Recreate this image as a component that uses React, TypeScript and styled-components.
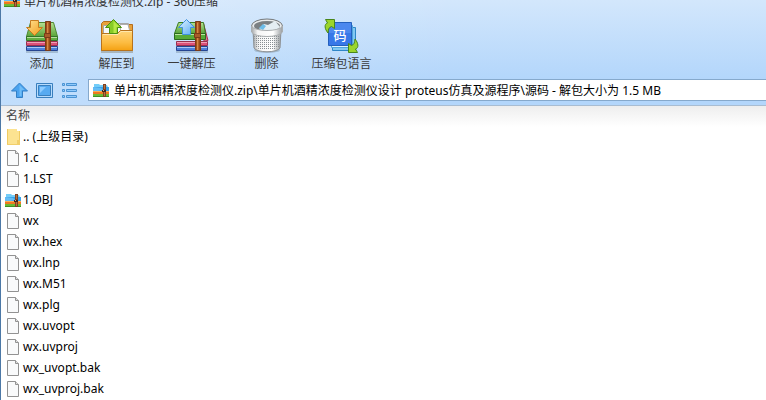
import React from "react";
import styled, { createGlobalStyle } from "styled-components";

const GlobalStyle = createGlobalStyle`
  * { box-sizing: border-box; }
  body {
    margin: 0;
    background: #fff;
    color: #000;
    font: 12px/16px "Noto Sans", "Noto Sans CJK SC", sans-serif;
    overflow: hidden;
  }
  button, input { font: inherit; color: inherit; }
  button { border: 0; padding: 0; background: none; cursor: pointer; }
  svg { display: block; flex: none; }
`;

const Window = styled.div`
  min-height: 100vh;
  border-left: 1px solid #4c78a6;
`;

const Chrome = styled.header`
  background: linear-gradient(100deg, rgba(255, 255, 255, 0.2), transparent 60%),
    linear-gradient(#d3e7fc, #b3d6fb 75%);
  border-bottom: 1px solid #a9bdd2;
`;

const TitleBar = styled.div`
  display: flex;
  align-items: flex-end;
  gap: 4px;
  height: 8px;
  padding-left: 3px;
  overflow: hidden;
  color: #333;
`;

const Title = styled.span`
  line-height: 12px;
  white-space: nowrap;
`;

const Toolbar = styled.div`
  display: flex;
  padding: 8px 0 0 3px;
`;

const ToolButton = styled.button`
  display: flex;
  flex-direction: column;
  align-items: center;
  justify-content: flex-start;
  gap: 2px;
  width: 75px;
  height: 60px;
  color: #3b3b3b;
  white-space: nowrap;
`;

const AddressRow = styled.div`
  display: flex;
  align-items: center;
  gap: 5px;
  height: 29px;
  padding: 0 0 1px 8px;
`;

const NavButton = styled.button`
  width: 20px;
  height: 20px;
`;

const AddressBox = styled.label`
  display: flex;
  flex: 1;
  align-items: center;
  gap: 5px;
  height: 22px;
  margin-left: 4px;
  padding-left: 4px;
  border: 1px solid #86a9cc;
  border-right: 0;
  background: #fff;
`;

const AddressInput = styled.input`
  flex: 1;
  min-width: 0;
  height: 20px;
  padding: 0;
  border: 0;
  outline: 0;
  background: transparent;
`;

const FileTable = styled.table`
  width: 100%;
  border-spacing: 0;
`;

const NameHeader = styled.th`
  height: 21px;
  padding: 0 5px 1px;
  background: linear-gradient(#eeeeee, #fff);
  color: #444;
  font-weight: 400;
  text-align: left;
`;

const NameCell = styled.td`
  padding: 0 4px;
`;

const Entry = styled.div`
  display: flex;
  align-items: center;
  gap: 2px;
  height: 21px;
  padding-bottom: 1px;
  white-space: nowrap;
`;

const ArchiveIcon = () => (
  <svg width="16" height="16" viewBox="0 0 16 16" aria-hidden="true">
    <path d="M1 5V2h5l1 1h7l1 2z" fill="#74cdf8" />
    <path d="M0 5h16v5H0z" fill="#3aa2ea" />
    <path d="M0 5l8 1 2 2-10 2z" fill="#65bdf5" />
    <path d="M0 9h16v3H0z" fill="#ef7920" />
    <path d="M0 9h16v1H0z" fill="#ffac51" />
    <path d="M0 12h16v3H0z" fill="#6cb936" />
    <path d="M0 14h16v1H0z" fill="#3d9224" />
    <path d="M10 2h3v13h-3z" fill="#7d4223" />
    <path d="M11 3h1v4h-1zm0 7h1v4h-1z" fill="#b8703e" />
    <path d="M9 8h4v2H9z" fill="#40251c" />
    <path d="M10 8h1v1h-1z" fill="#d7ad82" />
  </svg>
);

const FolderIcon = () => (
  <svg width="16" height="16" viewBox="0 0 16 16" aria-hidden="true">
    <path d="M2 0h10v2h3v14H2z" fill="#fce391" />
    <path d="M2 0h1v16H2zM14 2h1v14h-1z" fill="#f0cb62" />
    <path d="M12 11h3v5H2v-1h10z" fill="#f2cf6b" />
  </svg>
);

const PageIcon = () => (
  <svg width="16" height="16" viewBox="0 0 16 16" aria-hidden="true">
    <path d="M2.500 .5h8l3 3v12h-11z" fill="#f9fafb" stroke="#929292" />
    <path d="M10.500 .5v3h3" fill="#e1e1e1" stroke="#929292" />
  </svg>
);

const Books = ({ extract = false }: { extract?: boolean }) => {
  const id = extract ? "extract" : "add";
  return (
    <svg width="36" height="38" viewBox="0 0 36 38" aria-hidden="true">
      <defs>
        <linearGradient id={`${id}-cover`} x2="0" y2="1">
          <stop stopColor="#b5e093" />
          <stop offset="1" stopColor="#58a438" />
        </linearGradient>
        <linearGradient id={`${id}-belt`}>
          <stop stopColor="#7b3109" />
          <stop offset=".45" stopColor="#ce7631" />
          <stop offset="1" stopColor="#732f0e" />
        </linearGradient>
        <linearGradient id={`${id}-arrow`} x2="1" y2="1">
          <stop stopColor={extract ? "#e3f4ff" : "#ffe294"} />
          <stop offset="1" stopColor={extract ? "#54aaf4" : "#f29b16"} />
        </linearGradient>
      </defs>
      <path d="M2 36h32" stroke="#6d8599" strokeWidth="2" opacity=".4" />
      {extract && <path d="M29.500 7.500l4.500 17-4 1z" fill="#df7890" stroke="#a82c4a" />}
      <path d="M2.500 30.500h31v4h-31z" fill="#4f80dc" stroke="#254591" />
      <path d="M3 31.500h30" stroke="#a9c8f5" />
      <path d="M2.500 25.500h31v4h-31z" fill="#dc527a" stroke="#98304e" />
      <path d="M3 26.500h30" stroke="#f0a0b6" />
      {extract ? (
        <>
          <path d="M4.500 6.500h25l2 11h-31z" fill={`url(#${id}-cover)`} stroke="#387b22" />
          <path d="M.5 17.500h31v6h-31z" fill="#57ab38" stroke="#2c6b1f" />
          <path d="M1 18.500h30" stroke="#bce79d" />
        </>
      ) : (
        <>
          <path d="M6.500 6.500h23l4 14h-31z" fill={`url(#${id}-cover)`} stroke="#4d8730" />
          <path d="M2.500 20.500h31v4h-31z" fill="#62af43" stroke="#347529" />
          <path d="M3 21.500h30" stroke="#b7df9b" />
        </>
      )}
      <path d="M21.500 5.500h5v29h-5z" fill={`url(#${id}-belt)`} stroke="#7b3b17" />
      <path d="M23.500 7v27" stroke="#df9554" opacity=".7" />
      <path d="M20.500 17.500h6v4h-6z" fill="#a95b29" stroke="#7b3b17" />
      {extract ? (
        <path d="M12.500 3.500l8 8h-4v7h-8v-7h-4z" fill={`url(#${id}-arrow)`} stroke="#3f91dc" />
      ) : (
        <path d="M6.500 4.500h8v7h4l-8 8-8-8h4z" fill={`url(#${id}-arrow)`} stroke="#c67c20" />
      )}
    </svg>
  );
};

const ExtractTo = () => (
  <svg width="36" height="38" viewBox="0 0 36 38" aria-hidden="true">
    <defs>
      <linearGradient id="folder-face" x2="0" y2="1">
        <stop stopColor="#ffd57a" />
        <stop offset=".6" stopColor="#fcbc42" />
        <stop offset="1" stopColor="#f4a112" />
      </linearGradient>
    </defs>
    <path d="M2 36h32" stroke="#7a7461" strokeWidth="2" opacity=".4" />
    <path d="M2.500 7.500l2-2h7l2 3h20v26h-31z" fill="#e7a13a" stroke="#b46d1c" />
    <path d="M4.500 9.500h10l3-2h12v12h-25z" fill="#f6f7f8" stroke="#a6a6a6" />
    <path d="M21 8.500h8l3 11H22z" fill="#fff" stroke="#adadad" />
    <path d="M2.500 17.500h16l3-3h12v20h-31z" fill="url(#folder-face)" stroke="#b8731c" />
    <path d="M4 18.500h15l3-3h11" fill="none" stroke="#ffe8ad" />
    <path d="M14.500 3.500l8 8h-4v6h-8v-6h-4z" fill="#87cb26" stroke="#4a9112" />
    <path d="M14.500 5l6 6h-3v6h-3z" fill="#b6e848" />
  </svg>
);

const Bin = () => (
  <svg width="36" height="38" viewBox="0 0 36 38" aria-hidden="true">
    <defs>
      <linearGradient id="bin-metal">
        <stop stopColor="#a4a7a9" />
        <stop offset=".2" stopColor="#f5f5f5" />
        <stop offset=".7" stopColor="#fff" />
        <stop offset="1" stopColor="#999da0" />
      </linearGradient>
      <pattern id="bin-mesh" width="2" height="2" patternUnits="userSpaceOnUse">
        <path d="M1 0h1v1H1z" fill="#888e92" />
      </pattern>
    </defs>
    <ellipse cx="18" cy="34" rx="13" ry="3" fill="#758693" opacity=".4" />
    <path d="M4 14l1 18c3 5 23 5 26 0l1-18z" fill="url(#bin-metal)" stroke="#8d9194" />
    <path d="M5 18h26l-1 13c-4 4-20 4-24 0z" fill="url(#bin-mesh)" />
    <ellipse cx="18" cy="10" rx="15.500" ry="7" fill="#e9ebec" stroke="#737779" />
    <ellipse cx="18" cy="10" rx="13" ry="5" fill="#7b8083" />
    <path d="M10 13l5-5 4 1 7-4 5 6-5 4H14z" fill="#e5eef3" />
    <path d="M10 12l4-4 3 2-3 4z" fill="#6dbde9" />
    <path d="M2.500 10v6c3 6 28 6 31 0v-6c-3 6-28 6-31 0z" fill="url(#bin-metal)" stroke="#aaaeb0" />
  </svg>
);

const Language = () => (
  <svg width="36" height="38" viewBox="0 0 36 38" aria-hidden="true">
    <path d="M8.500 11.500h23v23h-23z" fill="#82c8f2" stroke="#2f86c7" />
    <path d="M7.500 9.500h21v22h-21z" fill="#def4ff" stroke="#50a6dd" />
    <path d="M4.500 6.500h23v23h-23z" fill="#3878e8" stroke="#2460bd" />
    <path d="M5 7h22v10H5z" fill="#4c88ee" />
    <text x="16" y="24" textAnchor="middle" fill="#fff" fontSize="13" fontWeight="500">码</text>
    <g fill="#9bd52b" stroke="#48861b" strokeLinejoin="round">
      <path id="turn-arrow" d="M4 17C.5 13 0 8 3.500 7L1.500 3.500h9v9l-3-2c-3 1-3 3-3.500 6.500z" />
      <use href="#turn-arrow" transform="rotate(180 17.500 20)" />
    </g>
  </svg>
);

const UpIcon = () => (
  <svg width="20" height="20" viewBox="0 0 20 20" aria-hidden="true">
    <path d="M10.500 3l8 8h-5v6.500h-6V11h-5z" fill="#4aa2ef" stroke="#327fc5" />
    <path d="M10.500 5l5 5h-3v6h-2z" fill="#71bdf7" />
  </svg>
);

const PreviewIcon = () => (
  <svg width="20" height="20" viewBox="0 0 20 20" aria-hidden="true">
    <path d="M2.500 3.500h16v14h-16z" fill="#b7dbfc" stroke="#397fbe" />
    <path d="M4.500 5.500h12v10h-12z" fill="#57aaf1" stroke="#397fbe" />
    <path d="M6 7h6l-6 6z" fill="#8ecbff" />
  </svg>
);

const ListIcon = () => (
  <svg width="20" height="20" viewBox="0 0 20 20" aria-hidden="true">
    <path
      d="M3.500 3.500h2v2h-2zM7.500 3.500h10v2h-10zM3.500 9.500h2v2h-2zM7.500 9.500h10v2h-10zM3.500 15.500h2v2h-2zM7.500 15.500h10v2h-10z"
      fill="#8fc9fb"
      stroke="#4a93d3"
    />
  </svg>
);

const tools = [
  { label: "添加", icon: <Books /> },
  { label: "解压到", icon: <ExtractTo /> },
  { label: "一键解压", icon: <Books extract /> },
  { label: "删除", icon: <Bin /> },
  { label: "压缩包语言", icon: <Language /> },
];

const files = [
  ".. (上级目录)", "1.c", "1.LST", "1.OBJ", "wx", "wx.hex", "wx.lnp", "wx.M51",
  "wx.plg", "wx.uvopt", "wx.uvproj", "wx_uvopt.bak", "wx_uvproj.bak",
];

const iconFor = (name: string) => {
  if (name.startsWith("..")) return <FolderIcon />;
  return name.endsWith(".OBJ") ? <ArchiveIcon /> : <PageIcon />;
};

export default function App() {
  return (
    <>
      <GlobalStyle />
      <Window>
        <Chrome>
          <TitleBar>
            <ArchiveIcon />
            <Title>单片机酒精浓度检测仪.zip - 360压缩</Title>
          </TitleBar>
          <Toolbar>
            {tools.map((tool) => (
              <ToolButton key={tool.label} type="button">
                {tool.icon}
                {tool.label}
              </ToolButton>
            ))}
          </Toolbar>
          <AddressRow>
            <NavButton type="button" aria-label="向上"><UpIcon /></NavButton>
            <NavButton type="button" aria-label="预览"><PreviewIcon /></NavButton>
            <NavButton type="button" aria-label="列表"><ListIcon /></NavButton>
            <AddressBox>
              <ArchiveIcon />
              <AddressInput
                aria-label="路径"
                defaultValue="单片机酒精浓度检测仪.zip\单片机酒精浓度检测仪设计 proteus仿真及源程序\源码 - 解包大小为 1.5 MB"
              />
            </AddressBox>
          </AddressRow>
        </Chrome>
        <FileTable>
          <thead>
            <tr><NameHeader scope="col">名称</NameHeader></tr>
          </thead>
          <tbody>
            {files.map((name) => (
              <tr key={name}>
                <NameCell>
                  <Entry>
                    {iconFor(name)}
                    {name}
                  </Entry>
                </NameCell>
              </tr>
            ))}
          </tbody>
        </FileTable>
      </Window>
    </>
  );
}
